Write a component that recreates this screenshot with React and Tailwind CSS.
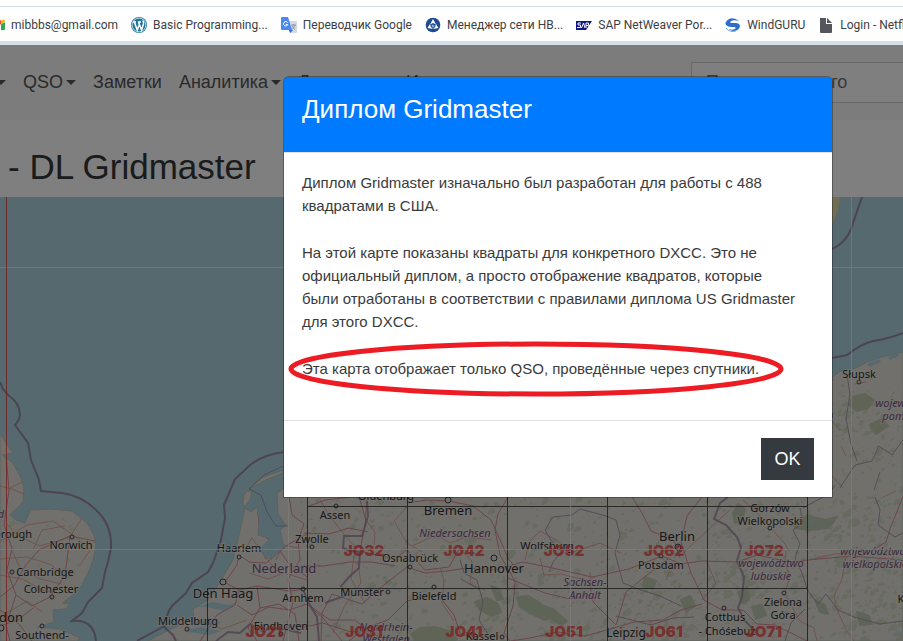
import { useState } from "react";

const bookmarks = [
  { icon: "gmail", label: "mibbbs@gmail.com" },
  { icon: "wordpress", label: "Basic Programming..." },
  { icon: "translate", label: "Переводчик Google" },
  { icon: "network", label: "Менеджер сети НВ..." },
  { icon: "sap", label: "SAP NetWeaver Por..." },
  { icon: "wind", label: "WindGURU" },
  { icon: "file", label: "Login - Netflix" },
];

const navItems = [
  { label: "QSO", caret: true },
  { label: "Заметки" },
  { label: "Аналитика", caret: true },
  { label: "Дипломы", caret: true },
  { label: "Инструменты", caret: true },
];

const BookmarkIcon = ({ name }) => {
  const cls = "w-4 h-4 shrink-0";
  if (name === "gmail")
    return (
      <svg viewBox="0 0 16 16" className={cls}>
        <path d="M0 3v10h4V7l4 3 4-3V3L8 6 4 3z" fill="#ea4335" />
        <path d="M12 7v6h3q1 0 1-1V5z" fill="#34a853" />
        <path d="M12 7V4l2-1.500q2-.5 2 2z" fill="#fbbc04" />
      </svg>
    );
  if (name === "wordpress")
    return (
      <svg viewBox="0 0 16 16" className={cls}>
        <circle cx="8" cy="8" r="8" fill="#21759b" />
        <circle cx="8" cy="8" r="6.900" fill="none" stroke="#fff" strokeWidth=".7" />
        <path d="M2 5h3M7 5h3M3.300 5l3 8 2-5.500M7.500 5l3 8 2-6q.5-2-.8-3.500" fill="none" stroke="#fff" strokeWidth="1.500" />
      </svg>
    );
  if (name === "translate")
    return (
      <svg viewBox="0 0 16 16" className={cls}>
        <path d="M6 4h9q1 0 1 1v10q0 1-1 1H9z" fill="#d5d8dc" />
        <path d="M8 13h4l-3 3z" fill="#3267c8" />
        <path d="M1 0h6l4 13H1q-1 0-1-1V1q0-1 1-1z" fill="#4a89f3" />
        <path d="M6.500 5.500a2.200 2.200 0 1 0 .3 2H4.800" fill="none" stroke="#fff" />
        <path d="M10 8h5M12.500 7v1M14 8q-1 3-3 4.500M11 9q1 2 3 3.500" fill="none" stroke="#778899" strokeWidth=".8" />
      </svg>
    );
  if (name === "network")
    return (
      <svg viewBox="0 0 16 16" className={cls}>
        <circle cx="8" cy="8" r="7.300" fill="#20498e" />
        <path d="M8 2 11 7.500 8 6 5 7.500zM2.500 11l2.500-4 .8 3 2.200 2zM13.500 11l-2.500-4-.8 3-2.200 2z" fill="#fff" />
        <circle cx="8" cy="9" r="1.500" fill="#7fa7dc" />
      </svg>
    );
  if (name === "sap")
    return (
      <svg viewBox="0 0 16 16" className={cls}>
        <path d="M0 4h16l-6 9H0z" fill="#10168a" />
        <path d="M5 6H2v2h2.500v2.500H1M5.500 11l2-5 1.500 5M10 11V6h2.500v2.500H10" fill="none" stroke="#fff" />
      </svg>
    );
  if (name === "wind")
    return (
      <svg viewBox="0 0 16 16" className={cls}>
        <path d="M14 4Q9 0 4 2-1 5 1 8 3 10.500 8 10q3.500 0 2.500 1.500-2 2-7 .5 4 3.500 9 1 4-3 1.500-6Q12.500 5.500 8 6 4.500 6.200 5.500 4.500 8 2.500 14 4z" fill="#2a70c8" />
        <path d="M1 11q4 5 10 3" fill="none" stroke="#72a8e5" />
      </svg>
    );
  return (
    <svg viewBox="0 0 16 16" className={cls}>
      <path d="M2 1h6v6h6v8q0 1-1 1H3q-1 0-1-1z" fill="#54565b" />
      <path d="M9 1l5 5H9z" fill="#54565b" />
    </svg>
  );
};

const Caret = () => (
  <svg viewBox="0 0 10 5" className="w-[10px] h-[5px] shrink-0">
    <path d="M0 0h10L5 5z" fill="currentColor" />
  </svg>
);

// woodland patches, spread with a small seeded generator
const patches = (seed, count, x, y, w, h) => {
  let s = seed;
  const next = () => {
    s = (s * 16807) % 2147483647;
    return s / 2147483647;
  };
  return Array.from({ length: count }, () => {
    const px = x + next() * w;
    const py = y + next() * h;
    const r = 1 + next() * next() * next() * 8;
    return `M${px} ${py}l${r} ${-r * next()} ${r * next()} ${r * 0.7} ${-r * 0.6} ${r * next()} ${-r} ${r * 0.2}z`;
  }).join("");
};

const woods = [
  patches(11, 800, 300, 495, 603, 146),
  patches(71, 300, 480, 570, 330, 71),
  patches(37, 300, 832, 375, 71, 266),
  patches(53, 220, 700, 500, 203, 110),
].join("");
const britishWoods = patches(97, 60, 0, 515, 85, 110);
const lakes = patches(23, 26, 310, 500, 590, 140);

// the larger forests: Harz, Sauerland, Solling, Lusatia, Pomerania
const forests = [
  "M411 634l9-6 15-1 14 4 8 8-6 4-36-2z",
  "M475 602l12-4 10 5 4 9-9 4-12-6zM491 586l8 3 4 10-6 1z",
  "M517 597l11-1 12 7 12 14-7 3-15-7-10-6z",
  "M541 605l12 4 14 12-6 4-15-9zM645 577l11 4-3 8-10-3z",
  "M681 600l9-4 5 10-9 6zM752 607l10-2 4 10-10 4z",
  "M733 513l5-9 7 5-3 12-7 2zM738 592l9-5 2 13-7 3z",
  "M795 521l14-5 16 4 12-3-8 11-20 2-14-2z",
  "M852 397l13-3 9 6-6 8-11 3-8-6zM870 425l12-6 6 7-12 8z",
  "M857 612l12 4 3 8-12 1zM815 600l10 5 3 9-8-2z",
].join("");

const land = [
  "M0 433 6 443 13 453 2 455 13 463 21 478 24 488 23 502 10 515 16 520 25 523 28 516 31 510 50 509 72 511 87 523 94 535 96 546 93 560 88 573 81 586 75 593 63 603 70 604 66 609 53 610 54 622 37 627 60 629 80 638 78 641H0z",
  "M245 508 251 512 257 507 259 522 258 535 268 538 272 548 264 558 273 558 284 547 280 530 286 525 278 514 277 493 290 484 320 478 832 470V377L841 371 850 370 860 366 867 362 882 357 903 352V641H148L165 632 178 626 176 616 194 622 193 609 208 600 223 577 233 560 238 540z",
  "M243 500q1-9 8-10 2 7-4 14-5 5-4-4z",
  "M249 489 263 477 283 470V473L266 480z",
  "M832 197h8q-1 15-8 27z",
  "M0 411l4 1-4 2z",
];

const inlets = [
  "M198 607 212 602 229 605 240 601 225 611 207 607z",
  "M192 619 209 618 222 622 211 627 193 624z",
  "M182 631 201 627 221 631 208 635z",
  "M267 541 276 533 281 543 274 552 264 556 260 548z",
  "M867 364 879 359 881 362 870 367zM888 357l10-4 1 3-9 4z",
];

const motorways = [
  "M6 455 9 490 4 525 12 548 7 570 16 595 6 625 10 641",
  "M0 597 14 586 25 566 39 550 70 536 95 541",
  "M16 595 32 606 50 597 65 575 70 537",
  "M0 626 18 620 33 608M0 610 19 624 32 641",
  "M283 487 269 500 258 512 260 532 277 547 289 564 307 577",
  "M225 582 237 565 239 555 249 562 266 563 289 544 307 534",
  "M224 582 239 590 257 586 289 591 307 589",
  "M239 590 235 605 217 615 200 641",
  "M257 586 260 608 248 628 257 641",
  "M260 608 279 604 295 614 299 641",
  "M237 605 252 615 269 607 289 610 307 604 323 618 342 641",
  "M289 497 292 515 304 524 298 540 300 560 288 579 293 602 283 641",
  "M307 507 325 500 360 496M340 485 360 500 366 520 360 551 394 559 407 550 425 570 449 567 460 548",
  "M304 533 329 534 349 528 368 532M300 566 324 566 349 562 372 562 395 566",
  "M321 641 322 613 332 594 362 604 385 584 407 567",
  "M407 567 425 573 447 571 467 568 495 570 523 562 548 567 592 577 629 569 662 556",
  "M407 503 427 500 449 501 473 506 491 520 501 542 508 558 517 570",
  "M508 497 498 514 495 530 500 555 511 574 515 582 513 606 504 633 510 641",
  "M632 497 642 513 651 531 674 540 680 558M702 497 687 516 681 542 691 573 704 600 722 610",
  "M721 610 743 610 757 624 775 625 807 641M662 556 681 564 702 561 737 562 757 563",
  "M737 562 757 555 790 562 808 560 851 556 903 560",
  "M616 625 626 592 642 579 668 559M616 625 594 603 590 595 570 599 545 593 525 585 508 578",
  "M511 641 530 638 557 632 585 636 607 630 634 622 663 620 681 610 702 604",
  "M349 641 365 628 388 620 407 601 438 595 454 615 460 633 478 641",
  "M307 604 330 620 355 620 371 633 388 641M300 628 323 623 351 632 390 629",
  "M903 497 891 526 886 542 868 553 851 559",
];

const roads = [
  "M0 486 12 489 24 494M8 489 22 482M0 541 27 525 53 521 73 535 90 550 80 565",
  "M7 524 18 536 40 546 70 537 82 518M0 559 27 557 52 565 66 580",
  "M12 551 21 570 40 579 62 584M33 550 42 530 65 526",
  "M0 575 22 579 42 590 62 594M7 613 27 601 42 612",
  "M276 560 283 545 298 548M249 573 268 579 284 573 307 580",
  "M246 548 252 538 266 558 277 571M207 622 222 629 247 620",
  "M320 500 329 515 343 533 355 547 351 579 365 603",
  "M367 500 365 519 375 532 374 545M407 507 394 521 407 543 422 552",
  "M412 546 436 535 450 543 466 537 492 540M460 550 472 561 470 584 485 590",
  "M440 568 444 580 442 603 454 621M358 563 361 583 344 607 333 633",
  "M525 560 530 541 540 531 558 541 571 553M540 558 544 575 561 574 589 581",
  "M590 572 591 594M570 553 600 543 621 553M661 556 671 568 666 580",
  "M681 555 710 528 730 510M743 500 759 515 770 527 785 544 789 551",
  "M786 551 785 565 790 575 785 594 800 621 814 628 817 641",
  "M707 562 716 584 702 600M846 556 842 579 834 596 837 610 847 631 854 641",
  "M832 421 840 430M841 446 846 456M855 384 866 382M832 476 843 488",
  "M883 497 896 491M810 560 834 554 861 553",
];

const borders = [
  "M367 501 368 516 362 536 344 536 343 548 350 551 360 552 359 568 350 576 341 586 347 595 333 600 325 603",
  "M303 589 307 600 317 617 319 641M216 641 228 632 240 633 250 624 262 631 278 628 301 633",
  "M728 497 720 503 714 519 726 525 737 537 741 547 737 561 744 577 742 597 738 608 745 621 755 631",
];

const stateBorders = [
  "M545 530 553 517 572 515 580 509 606 516 616 520 620 535 615 553 623 583 641 590 660 596 681 606",
  "M545 530 552 542 562 551 553 562 549 572",
  "M840 488 855 465 872 461 879 446 892 455 903 440",
  "M847 375 850 394 846 419 851 444 857 461M874 490 880 472",
  "M800 508 803 523 793 530 800 544 795 558 802 573 808 591 818 604 826 594 838 610 854 617 880 624 903 621",
  "M803 508 825 496 835 486M875 497 880 510 878 525 895 537 903 533",
  "M460 560 464 573 477 580 483 602 479 620 490 637M480 590 461 579",
  "M616 616 651 625 673 618 694 617M785 641 791 623 805 609",
];

const seaBorders = [
  "M0 382 3 389 8 395q12 8 12 20 0 4-5 10L28 443 31 460 39 480 41 491 62 493Q83 496 97 511 112 525 111 548L108 562 105 572 102 588 88 602 82 613 72 621Q94 619 96 641",
  "M283 452Q259 456 248 467L235 479 224 505 225 518 221 540 213 563 208 572 192 583 186 593 172 606Q166 613 166 625L157 630 137 641M163 626 173 635 176 641",
  "M862 197 853 223Q848 242 832 249",
  "M832 358 847 355Q861 344 873 341 888 339 903 333",
];

const towns = [
  [72, 537, 2], [12, 572, 2], [52, 597, 2], [42, 626, 2], [1, 628, 3],
  [239, 557, 2], [223, 582, 3], [187, 629, 2], [336, 506, 2], [312, 547, 2],
  [303, 589, 2], [388, 592, 2], [410, 567, 2], [434, 587, 2], [448, 500, 3],
  [494, 558, 3], [678, 547, 3], [661, 556, 2], [770, 528, 2], [784, 593, 2],
  [724, 608, 2], [859, 382, 2], [502, 637, 2], [281, 634, 2],
];

const cities = [
  [13, 538, "orough", 11], [71, 549, "Norwich", 11], [45, 576, "Cambridge", 11],
  [51, 593, "Colchester", 11], [7, 622, "ndon", 13], [42, 639, "Southend-", 11],
  [239, 552, "Haarlem", 11], [223, 598, "Den Haag", 13], [188, 625, "Middelburg", 11],
  [303, 602, "Arnhem", 11], [281, 630, "Eindhoven", 11], [335, 519, "Assen", 11],
  [312, 543, "Zwolle", 11], [386, 500, "Oldenburg", 11], [448, 515, "Bremen", 13],
  [410, 562, "Osnabrück", 11], [362, 596, "Münster", 11], [434, 600, "Bielefeld", 11],
  [494, 573, "Hannover", 13], [547, 550, "Wolfsburg", 11], [482, 640, "Kassel", 11],
  [677, 541, "Berlin", 13], [661, 569, "Potsdam", 11], [770, 512, "Gorzów", 11],
  [770, 525, "Wielkopolski", 11], [783, 606, "Zielona", 11], [783, 619, "Góra", 11],
  [725, 621, "Cottbus", 11], [727, 635, "- Chóśebuz", 11], [626, 637, "Leipzig", 12],
  [859, 378, "Słupsk", 11], [812, 418, "Koszalin", 11], [912, 603, "Kalisz", 11],
];

const regions = [
  [455, 537, "Niedersachsen"], [386, 631, "Nordrhein-"], [386, 643, "Westfalen"],
  [585, 586, "Sachsen-"], [585, 599, "Anhalt"], [771, 567, "województwo"],
  [771, 580, "lubuskie"], [873, 555, "województwo"], [875, 568, "wielkopolskie"],
  [908, 407, "województwo"], [908, 420, "pomorskie"], [1, 518, "d"],
];

const squares = [
  [364, 556, "JO32"], [464, 556, "JO42"], [564, 556, "JO52"], [664, 556, "JO62"],
  [764, 556, "JO72"], [264, 637, "JO21"], [364, 637, "JO31"], [464, 637, "JO41"],
  [564, 637, "JO51"], [664, 637, "JO61"], [764, 637, "JO71"],
];

const GridMap = () => (
  <svg
    viewBox="0 197 903 444"
    preserveAspectRatio="xMinYMin slice"
    className="block w-full h-full font-['Noto_Sans',sans-serif]"
    role="img"
    aria-label="DL Gridmaster"
  >
    <defs>
      <clipPath id="land">
        <path d={land.join("")} />
      </clipPath>
    </defs>
    <rect y="197" width="903" height="444" fill="#aad3df" />
    <path d={land.join("")} fill="#e4e1d8" stroke="#b9c5bb" />
    <g clipPath="url(#land)">
      <path d={forests} fill="#b4c4a5" opacity=".8" strokeLinejoin="round" stroke="#b4c4a5" strokeWidth="2" />
      <path d={woods} fill="#bdcbae" opacity=".6" />
      <path d={britishWoods} fill="#d3ddbf" />
      <path d={lakes} fill="#aad3df" opacity=".5" />
      <path d={inlets.join("")} fill="#aad3df" />
      <path d={roads.join("")} fill="none" stroke="#e0a79c" strokeWidth="1" />
      <path d={motorways.join("")} fill="none" stroke="#d98a9a" strokeWidth="1" />
      <path d={stateBorders.join("")} fill="none" stroke="#a99bae" strokeWidth="1" />
      <path d={borders.join("")} fill="none" stroke="#9c83a0" strokeWidth="2" opacity=".8" />
    </g>
    <path d={land[4]} fill="#e0dba9" />
    <path d="M249 489 261 495 267 512 276 526 288 526M249 489 264 475 283 466" fill="none" stroke="#8a87ae" opacity=".7" />
    <path d={seaBorders.join("")} fill="none" stroke="#957591" strokeWidth="2" opacity=".8" />

    <g fill="#ddd" stroke="#444" strokeWidth="1">
      {towns.map(([x, y, r]) => (
        <circle key={`${x}-${y}`} cx={x} cy={y} r={r} />
      ))}
    </g>
    <g textAnchor="middle" stroke="#e9e7df" strokeWidth="2" strokeOpacity=".65" paintOrder="stroke">
      {cities.map(([x, y, name, size]) => (
        <text key={name} x={x} y={y} fontSize={size} fill="#303030">{name}</text>
      ))}
      {regions.map(([x, y, name]) => (
        <text key={`${name}-${x}`} x={x} y={y} fontSize="11" fontStyle="italic" fill="#785582">{name}</text>
      ))}
      <text x="284" y="573" fontSize="13" fill="#785582">Nederland</text>
    </g>

    <g fill="#f04646" opacity=".8" textAnchor="middle" fontSize="15" fontWeight="900" fontFamily="Inter, sans-serif">
      {squares.map(([x, y, name]) => (
        <text key={name} x={x} y={y}>{name}</text>
      ))}
    </g>

    <g fill="none" shapeRendering="crispEdges">
      <path
        d="M307.500 480V641M407.500 480V641M507.500 480V641M607.500 480V641M707.500 480V641M807.500 480V641M207.500 588V641M307 506.500H807M207 588.500H807"
        stroke="#222"
        strokeOpacity=".75"
      />
      <path d="M0 267.500H903M0 549.500H903M288.500 197V641M570.500 197V641M851.500 197V641" stroke="#fff" strokeOpacity=".65" />
      <path d="M6.500 197V641" stroke="#f03030" strokeOpacity=".75" />
    </g>
  </svg>
);

const InfoModal = ({ onClose }) => (
  <div className="absolute inset-0 flex justify-end items-start bg-black/50 pt-8 pr-[71px]">
    <div
      role="dialog"
      aria-labelledby="modal-title"
      className="w-[548px] max-w-full bg-white rounded-t-[5px] outline outline-black/30 text-[#3a3b3d]"
    >
      <div className="h-[76px] px-[18px] pt-4 bg-[#007bff] border-b border-[#dee2e6] rounded-t-[4px]">
        <h5 id="modal-title" className="text-[26px] leading-8 text-white">Диплом Gridmaster</h5>
      </div>
      <div className="px-[18px] pt-[18px] pb-10 text-[15px] leading-[23px] whitespace-nowrap">
        <p className="mb-6">
          Диплом Gridmaster изначально был разработан для работы с 488<br />
          квадратами в США.
        </p>
        <p className="mb-6">
          На этой карте показаны квадраты для конкретного DXCC. Это не<br />
          официальный диплом, а просто отображение квадратов, которые<br />
          были отработаны в соответствии с правилами диплома US Gridmaster<br />
          для этого DXCC.
        </p>
        <p className="relative">
          Эта карта отображает только QSO, проведённые через спутники.
          <svg viewBox="0 0 496 56" className="absolute -left-[14px] -top-4 w-[496px] h-14">
            <ellipse cx="248" cy="28" rx="245" ry="25" fill="none" stroke="#ed1c24" strokeWidth="5" />
          </svg>
        </p>
      </div>
      <div className="flex justify-end px-[18px] py-[17px] border-t border-[#dee2e6]">
        <button onClick={onClose} className="w-[53px] h-[42px] bg-[#343a40] text-[18px] text-white">
          OK
        </button>
      </div>
    </div>
  </div>
);

const App = () => {
  const [open, setOpen] = useState(true);

  return (
    <div className="flex flex-col h-screen overflow-hidden bg-white font-['Liberation_Sans',Arial,sans-serif]">
      <div className="h-[7px] shrink-0 border-b border-[#d5dfe8]" />
      <div className="flex items-center gap-[13px] h-[38px] pt-[2px] shrink-0 overflow-hidden border-b-4 border-[#d6e0e8] font-[Roboto,sans-serif] text-[12px] text-[#3c4043] whitespace-nowrap">
        {bookmarks.map((item) => (
          <a key={item.label} href="#" className="flex items-center gap-[6px] shrink-0 first:-ml-[11px]">
            <BookmarkIcon name={item.icon} />
            {item.label}
          </a>
        ))}
      </div>

      <div className="relative flex flex-col flex-1 min-h-0">
        <nav className="flex items-center justify-between h-[75px] shrink-0 overflow-hidden bg-[#f8f9fa] text-[18px] text-[#555] whitespace-nowrap">
          <div className="flex items-center gap-[17px] -ml-1">
            <Caret />
            {navItems.map((item) => (
              <a key={item.label} href="#" className="flex items-center gap-[3px]">
                {item.label}
                {item.caret && <Caret />}
              </a>
            ))}
          </div>
          <input
            type="text"
            aria-label="Поиск позывного"
            placeholder="Поиск позывного"
            className="w-[220px] h-[41px] shrink-0 -mr-2 px-[14px] bg-white border border-[#ced4da] placeholder:text-[#6c757d]"
          />
        </nav>
        <h2 className="h-[77px] shrink-0 pl-2 pt-[26px] text-[35px] leading-[42px] text-[#32363a] whitespace-nowrap">
          - DL Gridmaster
        </h2>
        <div className="flex-1 min-h-0 overflow-hidden">
          <GridMap />
        </div>
        {open && <InfoModal onClose={() => setOpen(false)} />}
      </div>
    </div>
  );
};

export default App;
